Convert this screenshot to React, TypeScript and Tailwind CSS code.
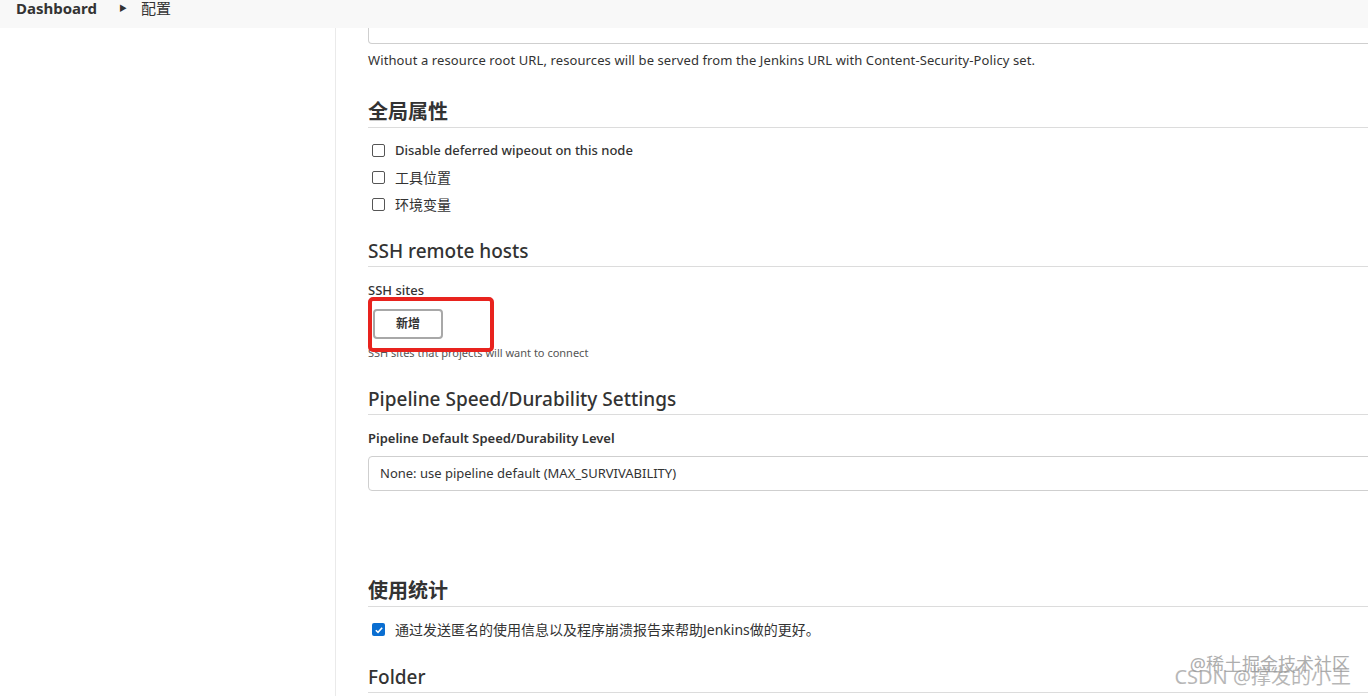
import React from 'react'

const font = { fontFamily: '"Noto Sans", "Noto Sans CJK SC", sans-serif' }

const SectionTitle: React.FC<{ title: string; bold?: boolean; className?: string }> = ({
  title,
  bold,
  className,
}) => (
  <div className={`flex h-[28px] items-end border-b border-[#dcdcdc] pb-[3px] ${className ?? ''}`}>
    <h2
      className={`leading-[24px] text-[#333] ${bold ? 'text-[20px] font-bold' : 'text-[19px] font-medium'}`}
    >
      {title}
    </h2>
  </div>
)

const CheckRow: React.FC<{ label: string; checked?: boolean; strong?: boolean }> = ({
  label,
  checked,
  strong,
}) => (
  <label className="flex h-[27px] items-center pl-[4px]">
    {checked ? (
      <span className="flex h-[13px] w-[13px] items-center justify-center rounded-[2px] bg-[#0a6ed1]">
        <svg viewBox="0 0 12 12" className="h-[10px] w-[10px]">
          <path d="M2.2 6.3 L4.8 8.8 L9.8 3.2" fill="none" stroke="white" strokeWidth="1.9" />
        </svg>
      </span>
    ) : (
      <span className="h-[13px] w-[13px] rounded-[2px] border border-[#555] bg-white" />
    )}
    <span className={`ml-[10px] text-[#333] ${strong ? 'text-[13px] font-medium' : 'text-[14px]'}`}>
      {label}
    </span>
  </label>
)

export default function App() {
  return (
    <div className="relative h-[696px] w-[1368px] overflow-hidden bg-white" style={font}>
      <div className="flex h-[28px] items-start bg-[#f8f8f8] pl-[16px]">
        <span className="text-[15px] font-bold leading-[16px] text-[#333]">Dashboard</span>
        <span className="ml-[22px] mr-[14px] text-[8px] leading-[16px] text-[#333]">▶</span>
        <span className="text-[15px] leading-[16px] text-[#333]">配置</span>
      </div>
      <div className="flex h-[668px]">
        <aside className="w-[336px] shrink-0 border-r border-[#eaeaea]" />
        <main className="flex-1 pl-[32px]">
          <div className="-mr-[10px] h-[16px] rounded-b-[4px] border-x border-b border-[#cfcfcf]" />
          <p className="flex h-[34px] items-center text-[13px] tracking-[0.1px] text-[#333]">
            Without a resource root URL, resources will be served from the Jenkins URL with
            Content-Security-Policy set.
          </p>
          <SectionTitle title="全局属性" bold className="mt-[22px] -mr-[10px]" />
          <div className="pt-[9px]">
            <CheckRow label="Disable deferred wipeout on this node" strong />
            <CheckRow label="工具位置" />
            <CheckRow label="环境变量" />
          </div>
          <SectionTitle title="SSH remote hosts" className="mt-[21px] -mr-[10px]" />
          <div className="flex h-[35px] items-end pb-[2px] text-[13px] font-medium text-[#333]">SSH sites</div>
          <div className="relative h-[45px] pt-[7px]">
            <button className="ml-[5px] h-[30px] w-[70px] rounded-[4px] border-2 border-[#a8a8a8] bg-white text-[12px] font-bold text-[#333]">
              新增
            </button>
            <div className="absolute left-0 top-[-5px] h-[55px] w-[126px] rounded-[5px] border-[4px] border-[#e8231e]" />
          </div>
          <p className="h-[12px] text-[11px] leading-[12px] text-[#555]">SSH sites that projects will want to connect</p>
          <SectionTitle title="Pipeline Speed/Durability Settings" className="mt-[28px] -mr-[10px]" />
          <div className="flex h-[35px] items-center pt-[12px] text-[13px] font-semibold text-[#333]">
            Pipeline Default Speed/Durability Level
          </div>
          <div className="mt-[6px] -mr-[10px] flex h-[35px] items-center rounded-[4px] border border-[#cfcfcf] pl-[11px] text-[13px] text-[#333]">
            None: use pipeline default (MAX_SURVIVABILITY)
          </div>
          <SectionTitle title="使用统计" bold className="mt-[88px] -mr-[10px]" />
          <div className="pt-[9px]">
            <CheckRow label="通过发送匿名的使用信息以及程序崩溃报告来帮助Jenkins做的更好。" checked />
          </div>
          <SectionTitle title="Folder" className="mt-[22px] -mr-[10px]" />
        </main>
      </div>
      <div className="pointer-events-none absolute right-[18px] top-[654px] text-[18px] leading-[20px] text-[#9a9a9a] opacity-80">
        @稀土掘金技术社区
      </div>
      <div className="pointer-events-none absolute right-[17px] top-[665px] text-[20px] leading-[24px] text-[#9a9a9a] opacity-70">
        CSDN @撑发的小王
      </div>
    </div>
  )
}
